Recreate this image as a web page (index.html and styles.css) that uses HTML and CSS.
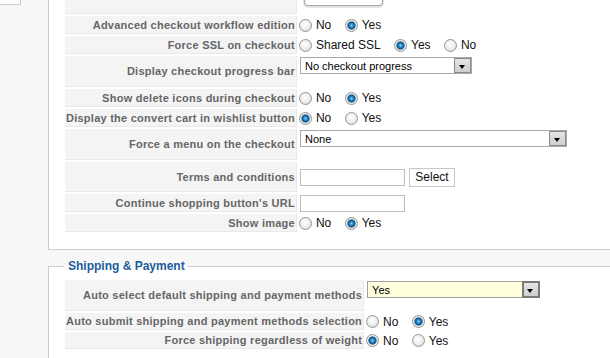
FILE: index.html
```html
<!DOCTYPE html>
<html lang="en">
<head>
  <meta charset="UTF-8" />
  <title>Checkout configuration</title>
  <link rel="stylesheet" href="styles.css">
</head>
<body>
  <div class="page">
    <div class="sidebar">
      <div class="side-box"></div>
    </div>

    <div class="main">
      <fieldset class="panel panel-top">
        <table class="admintable">
          <tr class="row-stub">
            <td class="key"></td>
            <td class="top"><div class="btn-stub"></div></td>
          </tr>
          <tr>
            <td class="key">Advanced checkout workflow edition</td>
            <td>
              <label class="opt"><input type="radio" name="workflow" value="0"> No</label>
              <label class="opt"><input type="radio" name="workflow" value="1" checked> Yes</label>
            </td>
          </tr>
          <tr>
            <td class="key">Force SSL on checkout</td>
            <td>
              <label class="opt"><input type="radio" name="ssl" value="shared"> Shared SSL</label>
              <label class="opt"><input type="radio" name="ssl" value="1" checked> Yes</label>
              <label class="opt"><input type="radio" name="ssl" value="0"> No</label>
            </td>
          </tr>
          <tr class="tall">
            <td class="key">Display checkout progress bar</td>
            <td class="top">
              <span class="select w-172">
                <select name="progress">
                  <option>No checkout progress</option>
                </select>
                <span class="arrow"></span>
              </span>
            </td>
          </tr>
          <tr>
            <td class="key">Show delete icons during checkout</td>
            <td>
              <label class="opt"><input type="radio" name="delete_icons" value="0"> No</label>
              <label class="opt"><input type="radio" name="delete_icons" value="1" checked> Yes</label>
            </td>
          </tr>
          <tr>
            <td class="key">Display the convert cart in wishlist button</td>
            <td>
              <label class="opt"><input type="radio" name="wishlist" value="0" checked> No</label>
              <label class="opt"><input type="radio" name="wishlist" value="1"> Yes</label>
            </td>
          </tr>
          <tr class="tall">
            <td class="key">Force a menu on the checkout</td>
            <td class="top">
              <span class="select w-267">
                <select name="menu">
                  <option>None</option>
                </select>
                <span class="arrow"></span>
              </span>
            </td>
          </tr>
          <tr class="mid">
            <td class="key">Terms and conditions</td>
            <td>
              <input class="text-input" type="text" name="terms">
              <button class="small-btn" type="button">Select</button>
            </td>
          </tr>
          <tr>
            <td class="key">Continue shopping button's URL</td>
            <td><input class="text-input" type="text" name="continue_url"></td>
          </tr>
          <tr>
            <td class="key">Show image</td>
            <td>
              <label class="opt"><input type="radio" name="show_image" value="0"> No</label>
              <label class="opt"><input type="radio" name="show_image" value="1" checked> Yes</label>
            </td>
          </tr>
        </table>
      </fieldset>

      <fieldset class="panel">
        <legend>Shipping &amp; Payment</legend>
        <table class="admintable">
          <tr class="tall">
            <td class="key">Auto select default shipping and payment methods</td>
            <td class="top">
              <span class="select w-173 focused">
                <select name="auto_select">
                  <option>Yes</option>
                </select>
                <span class="arrow"></span>
              </span>
            </td>
          </tr>
          <tr class="short">
            <td class="key">Auto submit shipping and payment methods selection</td>
            <td>
              <label class="opt"><input type="radio" name="auto_submit" value="0"> No</label>
              <label class="opt"><input type="radio" name="auto_submit" value="1" checked> Yes</label>
            </td>
          </tr>
          <tr class="short">
            <td class="key">Force shipping regardless of weight</td>
            <td>
              <label class="opt"><input type="radio" name="force_shipping" value="0" checked> No</label>
              <label class="opt"><input type="radio" name="force_shipping" value="1"> Yes</label>
            </td>
          </tr>
        </table>
      </fieldset>
    </div>
  </div>
</body>
</html>
```

FILE: styles.css
```css
body {
  margin: 0;
  background: #f7f7f7;
  font-family: "Liberation Sans", Arial, sans-serif;
  font-size: 11px;
  overflow: hidden;
}
.page {
  display: flex;
  align-items: flex-start;
}
.sidebar {
  width: 48px;
  flex: none;
}
.side-box {
  width: 20px;
  height: 4px;
  background: #fff;
  border-right: 1px solid #ccc;
  border-bottom: 1px solid #ccc;
}
.main {
  flex: none;
  width: 640px;
}

/* fieldsets */
.panel {
  margin: 0;
  padding: 0 0 15px 14px;
  border: 1px solid #ccc;
  background: #fff;
  min-width: 0;
}
.panel-top {
  border-top: none;
}
.panel + .panel {
  margin-top: 9px;
  padding-top: 5px;
}
.panel legend {
  margin-left: 1px;
  padding: 0 3px 0 4px;
  color: #1b5d9c;
  font-size: 12px;
  font-weight: bold;
}

/* admin table */
.admintable {
  border-collapse: separate;
  border-spacing: 2px;
}
.panel-top .admintable {
  margin-top: -2px;
}
.admintable tr {
  height: 18px;
}
.admintable tr.row-stub { height: 14px; }
.admintable tr.tall { height: 31px; }
.admintable tr.mid { height: 30px; }
.admintable tr.short { height: 17px; }
.admintable td {
  padding: 0;
  vertical-align: middle;
  white-space: nowrap;
  font-size: 12px;
  color: #111;
}
.admintable td.key {
  padding: 0 1px;
  background: #f4f4f4;
  border-bottom: 1px solid #e9e9e9;
  border-right: 1px solid #e9e9e9;
  color: #666;
  font-size: 11px;
  font-weight: bold;
  letter-spacing: 0.25px;
  text-align: right;
}
.admintable td.top {
  vertical-align: top;
  padding-top: 1px;
}

/* cut-off button from the row above */
.btn-stub {
  width: 77px;
  height: 5px;
  margin: -1px 0 0 5px;
  border: 1px solid #a8a8a8;
  border-top: none;
  border-radius: 0 0 4px 4px;
  box-shadow: 0 1px 0 1px #e4e4e4;
}

/* radios */
.opt {
  display: inline-flex;
  align-items: center;
  margin-right: 10px;
  vertical-align: middle;
}
.opt input {
  appearance: none;
  -webkit-appearance: none;
  width: 13px;
  height: 13px;
  margin: 0 4px 0 0;
  border: 1px solid #949494;
  border-radius: 50%;
  background: radial-gradient(circle at 45% 40%, #fff 0, #f2f2f2 40%, #d4d4d4 100%);
}
.opt input:checked {
  background: radial-gradient(circle at 50% 50%, #9fdcff 0, #2e8fd0 1.5px, #0c5688 3.5px, #6e8ea6 4px, #f0f0f0 4.6px, #d6d6d6 100%);
}

/* selects */
.select {
  position: relative;
  display: inline-block;
  margin-left: 1px;
}
.select select {
  appearance: none;
  -webkit-appearance: none;
  box-sizing: border-box;
  display: block;
  width: 100%;
  height: 17px;
  margin: 0;
  padding: 0 0 0 4px;
  border: 1px solid #a9a9a9;
  border-radius: 0;
  background: #fff;
  color: #000;
  font: 11px "Liberation Sans", Arial, sans-serif;
}
.w-172 { width: 172px; }
.w-267 { width: 267px; }
.w-173 { width: 173px; }
.select .arrow {
  position: absolute;
  top: 1px;
  right: 1px;
  box-sizing: border-box;
  width: 17px;
  height: 15px;
  border: 1px solid #8a8a8a;
  background: linear-gradient(#e4e4e4, #cfcfcf);
}
.select .arrow::after {
  content: "";
  position: absolute;
  left: 4px;
  top: 6px;
  border-left: 3.5px solid transparent;
  border-right: 3.5px solid transparent;
  border-top: 4px solid #000;
}
.select.focused select {
  background: #ffffdd;
  border-color: #a0a0a0;
}
.select.focused .arrow {
  border: 2px solid #7a7a7a;
  top: 0;
  right: 0;
  height: 17px;
  width: 18px;
}
.select.focused .arrow::after {
  left: 3px;
}

/* text input + button */
.text-input {
  box-sizing: border-box;
  width: 105px;
  height: 17px;
  margin: 0 0 0 1px;
  padding: 0 2px;
  border: 1px solid #bdbdbd;
  vertical-align: middle;
  font: 12px "Liberation Sans", Arial, sans-serif;
}
.small-btn {
  box-sizing: border-box;
  height: 19px;
  margin-left: 1px;
  padding: 0 5px;
  border: 1px solid #c8c8c8;
  background: #fff;
  color: #111;
  vertical-align: middle;
  font: 12px "Liberation Sans", Arial, sans-serif;
}
```
